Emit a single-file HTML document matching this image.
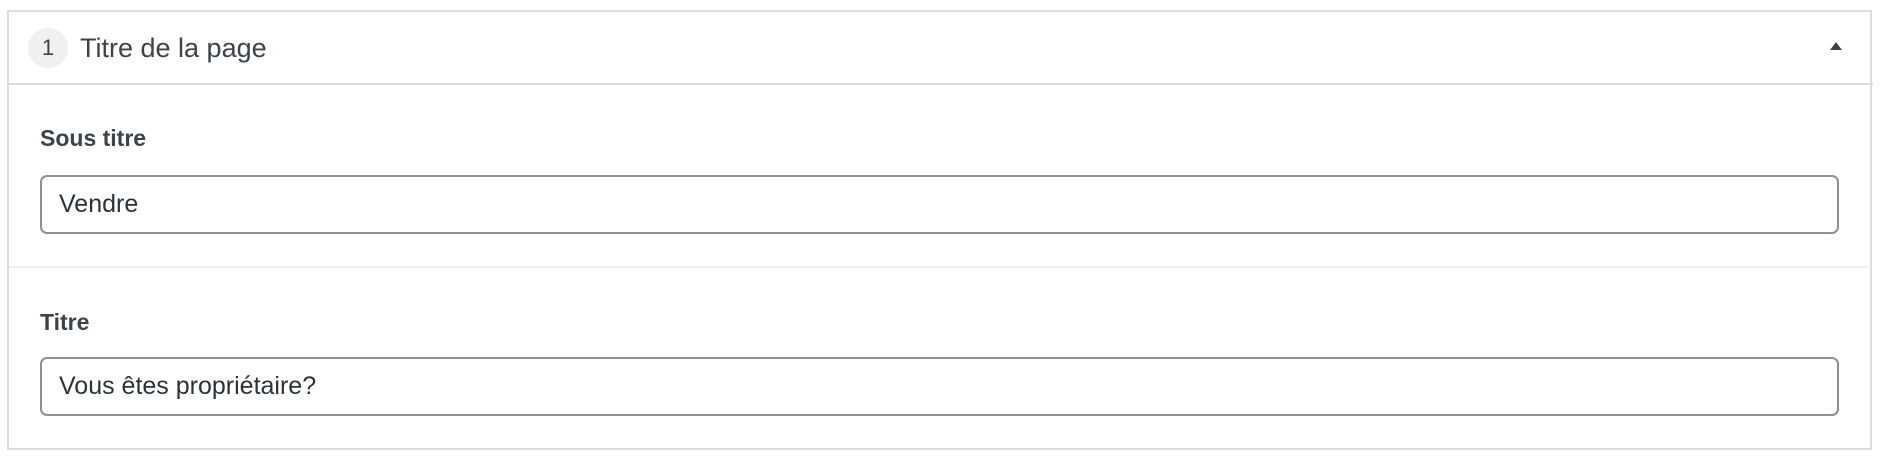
<!DOCTYPE html>
<html><head><meta charset="utf-8"><style>
html,body{margin:0;padding:0;width:1892px;height:464px;background:#fff;overflow:hidden;font-family:"Liberation Sans",Arial,sans-serif;}
.a{position:absolute;}
.box{left:7px;top:10px;width:1865px;height:440px;border:2px solid #dcdcde;box-sizing:border-box;}
.hline{left:7px;top:83px;width:1866px;height:2px;background:#dcdcde;}
.dline{left:9px;top:266px;width:1862px;height:2px;background:#f0f0f1;}
.badge{left:28px;top:28px;width:40px;height:40px;border-radius:50%;background:#f0f0f1;color:#3c434a;font-size:22px;line-height:40px;text-align:center;}
.title{left:80px;top:28px;font-size:27px;line-height:40px;color:#3c434a;}
.lbl{left:40px;font-size:23px;color:#3c434a;line-height:30px;font-weight:bold;}
.inp{left:40px;width:1799px;height:59px;border:2px solid #8c8f94;border-radius:7px;box-sizing:border-box;font-size:25px;color:#2c3338;line-height:55px;padding-left:17px;}
.tri{left:1830px;top:42px;width:0;height:0;border-left:6px solid transparent;border-right:6px solid transparent;border-bottom:8px solid #3c434a;}
</style></head><body>
<div class="a box"></div>
<div class="a hline"></div>
<div class="a badge">1</div>
<div class="a title">Titre de la page</div>
<div class="a tri"></div>
<div class="a lbl" style="top:123px">Sous titre</div>
<div class="a inp" style="top:175px">Vendre</div>
<div class="a dline"></div>
<div class="a lbl" style="top:307px">Titre</div>
<div class="a inp" style="top:357px">Vous êtes propriétaire?</div>
</body></html>
